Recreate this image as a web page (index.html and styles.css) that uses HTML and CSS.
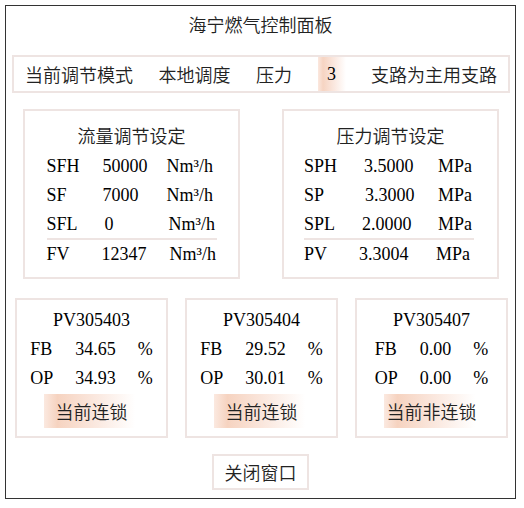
FILE: index.html
```html
<!DOCTYPE html>
<html lang="zh-CN">
<head>
<meta charset="utf-8">
<title>海宁燃气控制面板</title>
<link rel="stylesheet" href="styles.css">
</head>
<body>
<div class="panel">
  <div class="title zh">海宁燃气控制面板</div>

  <div class="mode-bar">
    <span class="zh">当前调节模式</span>
    <span class="zh">本地调度</span>
    <span class="zh">压力</span>
    <span class="num-badge">3</span>
    <span class="zh">支路为主用支路</span>
  </div>

  <div class="settings">
    <div class="card setting flow">
      <div class="card-title zh">流量调节设定</div>
      <div class="grid">
        <span>SFH</span><span>50000</span><span>Nm³/h</span>
        <span>SF</span><span>7000</span><span>Nm³/h</span>
        <span>SFL</span><span class="shift-r2">0</span><span class="shift-r2">Nm³/h</span>
        <span class="sep"></span>
        <span>FV</span><span class="shift-l1">12347</span><span class="shift-r3">Nm³/h</span>
      </div>
    </div>
    <div class="card setting press">
      <div class="card-title zh">压力调节设定</div>
      <div class="grid">
        <span>SPH</span><span>3.5000</span><span>MPa</span>
        <span>SP</span><span class="shift-r1">3.3000</span><span>MPa</span>
        <span>SPL</span><span class="shift-l2">2.0000</span><span>MPa</span>
        <span class="sep"></span>
        <span>PV</span><span class="shift-l5">3.3004</span><span class="shift-l2">MPa</span>
      </div>
    </div>
  </div>

  <div class="valves">
    <div class="card valve">
      <div class="valve-title">PV305403</div>
      <div class="vgrid">
        <span>FB</span><span>34.65</span><span>%</span>
        <span>OP</span><span>34.93</span><span>%</span>
      </div>
      <div class="status zh">当前连锁</div>
    </div>
    <div class="card valve">
      <div class="valve-title">PV305404</div>
      <div class="vgrid">
        <span>FB</span><span>29.52</span><span>%</span>
        <span>OP</span><span>30.01</span><span>%</span>
      </div>
      <div class="status zh">当前连锁</div>
    </div>
    <div class="card valve">
      <div class="valve-title">PV305407</div>
      <div class="vgrid">
        <span>FB</span><span>0.00</span><span>%</span>
        <span>OP</span><span>0.00</span><span>%</span>
      </div>
      <div class="status zh">当前非连锁</div>
    </div>
  </div>

  <div class="close-btn zh">关闭窗口</div>
</div>
</body>
</html>
```

FILE: styles.css
```css
* { box-sizing: border-box; }

html, body {
  margin: 0;
  padding: 0;
  background: #ffffff;
}

body {
  font-family: "Liberation Serif", "Noto Sans CJK SC", serif;
  font-size: 18px;
  color: #000;
}

.zh {
  font-family: "Noto Sans CJK SC", sans-serif;
  font-weight: 350;
  color: #222;
}

.panel {
  margin: 5px 0 0 5px;
  width: 511px;
  height: 494px;
  border: 1px solid #333;
  display: flex;
  flex-direction: column;
}

.title {
  height: 36px;
  line-height: 36px;
  text-align: center;
  margin-bottom: 13px;
}

.mode-bar {
  margin: 0 5px 0 6px;
  height: 38px;
  border: 2px solid #eee4e2;
  display: flex;
  justify-content: space-between;
  align-items: stretch;
  padding: 0 11px;
  line-height: 34px;
}

.num-badge {
  width: 28px;
  text-align: center;
  font-family: "Liberation Serif", serif;
  background: linear-gradient(to right, #fbe8df 0%, #f6d4c2 18%, #fbe9e1 60%, #ffffff 100%);
}

.settings {
  margin-top: 16px;
  display: flex;
  gap: 42px;
  padding-left: 17px;
}

.card {
  border: 2px solid #eee4e2;
  background: #fff;
}

.setting {
  width: 217px;
  height: 170px;
  padding: 9px 0 8px;
}

.card-title {
  height: 30px;
  line-height: 30px;
  text-align: center;
  margin-bottom: 2px;
}

.grid {
  display: grid;
  width: 170px;
  margin: 0 auto;
  line-height: 29px;
}

.flow .grid { grid-template-columns: 56px 64px 1fr; }
.press .grid { grid-template-columns: 60px 74px 1fr; margin-left: 20px; }

.sep {
  grid-column: 1 / -1;
  height: 2px;
  margin-top: -1px;
  background: #eee4e2;
}

.shift-r1 { margin-left: 1px; }
.shift-r2 { margin-left: 2px; }
.shift-r3 { margin-left: 3px; }
.shift-l1 { margin-left: -1px; }
.shift-l2 { margin-left: -2px; }
.shift-l5 { margin-left: -5px; }

.valves {
  margin-top: 19px;
  display: flex;
  gap: 17px;
  padding-left: 9px;
}

.valve {
  width: 153px;
  height: 140px;
  padding: 5px 0 8px;
  display: flex;
  flex-direction: column;
  align-items: center;
}

.valve-title {
  height: 30px;
  line-height: 30px;
  text-align: center;
}

.vgrid {
  display: grid;
  grid-template-columns: auto auto auto;
  column-gap: 22px;
  line-height: 29px;
}

.status {
  margin-top: 1px;
  width: 96px;
  height: 34px;
  line-height: 34px;
  text-align: center;
  background: linear-gradient(to right, #fbe9e0 0%, #f6d3c0 14%, #fae6dc 50%, #ffffff 95%);
}

.close-btn {
  margin: 16px auto 0;
  width: 97px;
  height: 36px;
  line-height: 32px;
  text-align: center;
  border: 2px solid #eee4e2;
}
```
